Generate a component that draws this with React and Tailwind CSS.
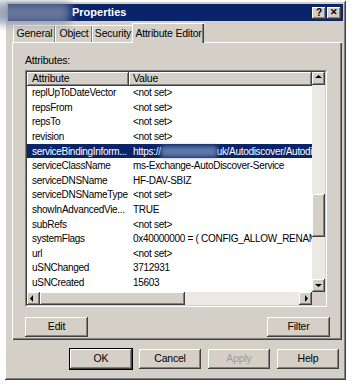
import React from 'react';

const rows = [
  ['replUpToDateVector', '<not set>'],
  ['repsFrom', '<not set>'],
  ['repsTo', '<not set>'],
  ['revision', '<not set>'],
  ['serviceBindingInform...', 'url', true],
  ['serviceClassName', 'ms-Exchange-AutoDiscover-Service'],
  ['serviceDNSName', 'HF-DAV-SBIZ'],
  ['serviceDNSNameType', '<not set>'],
  ['showInAdvancedVie...', 'TRUE'],
  ['subRefs', '<not set>'],
  ['systemFlags', '0x40000000 = ( CONFIG_ALLOW_RENAME )'],
  ['url', '<not set>'],
  ['uSNChanged', '3712931'],
  ['uSNCreated', '15603'],
  ['wWWHomePage', '<not set>'],
];

const raised =
  'bg-[#d4d0c8] shadow-[inset_-1px_-1px_#404040,inset_1px_1px_#ffffff,inset_-2px_-2px_#808080]';

const Btn = ({ children, className = '', disabled, isDefault }) => (
  <div
    className={`h-[20px] flex items-center justify-center text-[10.5px] tracking-[-0.2px] ${raised} ${
      isDefault ? 'outline outline-1 outline-black' : ''
    } ${disabled ? 'text-[#a09c94]' : 'text-black'} ${className}`}
  >
    {children}
  </div>
);

const Arrow = ({ dir }) => {
  const pts = {
    up: '3,6 6.5,3 10,6',
    down: '3,5 6.5,8 10,5',
    left: '6,3 3,6.5 6,10',
    right: '6,3 9,6.5 6,10',
  }[dir];
  return (
    <div className={`w-[13px] h-[13px] shrink-0 ${raised}`}>
      <svg width="13" height="13" viewBox="0 0 13 13">
        <polygon points={pts} fill="#000" />
      </svg>
    </div>
  );
};

const tab = 'h-[17px] flex items-center justify-center border-t border-l border-white shadow-[inset_-1px_0_#808080]';

export default function App() {
  return (
    <div
      className="w-[358px] h-[386px] bg-white relative overflow-hidden"
      style={{ fontFamily: '"Liberation Sans", Arial, sans-serif' }}
    >
      <div className={`absolute left-[5px] top-[1px] w-[341px] h-[379px] ${raised} p-[3px] flex flex-col`}>
        {/* title bar */}
        <div className="h-[17px] bg-[#0a246a] flex items-center relative">
          <span className="ml-[64px] text-white font-bold text-[11px]">Properties</span>
          <div className="ml-auto mr-[2px] flex gap-[1px]">
            <div className={`w-[14px] h-[12px] ${raised} flex items-center justify-center text-[10px] font-bold leading-none`}>?</div>
            <div className={`w-[14px] h-[12px] ${raised} flex items-center justify-center text-[9px] font-bold leading-none`}>✕</div>
          </div>
        </div>

        {/* tabs */}
        <div className="mt-[3px] ml-[5px] flex items-end h-[18px] text-[10.5px] tracking-[-0.2px] text-black">
          <div className={`${tab} w-[42px] rounded-tl-[2px]`}>General</div>
          <div className={`${tab} w-[37px]`}>Object</div>
          <div className={`${tab} w-[41px]`}>Security</div>
          <div className="h-[20px] -mb-[1px] w-[72px] -ml-[1px] flex items-center justify-center border-t border-l border-white bg-[#d4d0c8] relative z-10 shadow-[inset_-1px_0_#404040,inset_-2px_0_#808080]">
            Attribute Editor
          </div>
        </div>

        {/* tab panel */}
        <div className="ml-[4px] mr-[1px] h-[298px] border-t border-l border-white shadow-[inset_-1px_-1px_#404040,inset_-2px_-2px_#808080] px-[12px] pt-[12px] flex flex-col">
          <div className="text-[10.5px] tracking-[-0.2px] text-black leading-none">Attributes:</div>
          <div className="mt-[4px] w-[302px] h-[237px] border border-[#808080] border-r-white border-b-white">
            <div className="w-full h-full border border-[#404040] border-r-[#d4d0c8] border-b-[#d4d0c8] bg-white flex flex-col">
              <div className="flex flex-1 min-h-0">
                <div className="flex-1 flex flex-col min-w-0 overflow-hidden text-[10px] tracking-[-0.3px]">
                  <div className="h-[14px] flex shrink-0 text-[10.5px] tracking-[-0.2px]">
                    <div className={`w-[102px] ${raised} pl-[5px] flex items-center`}>Attribute</div>
                    <div className={`flex-1 ${raised} pl-[4px] flex items-center`}>Value</div>
                  </div>
                  {rows.map(([a, v, sel]) => (
                    <div
                      key={a}
                      className={`h-[14.6px] shrink-0 flex items-center whitespace-nowrap ${
                        sel ? 'bg-[#0a246a] text-white' : 'text-black'
                      }`}
                    >
                      <div className="w-[102px] pl-[5px] shrink-0 overflow-hidden">{a}</div>
                      <div className="pl-[4px] flex items-center">
                        {sel ? (
                          <>
                            <span>https://</span>
                            <span className="inline-block w-[56px] h-[11px] bg-[#5c78a8] blur-[2px]" />
                            <span>uk/Autodiscover/Autodiscover.xml</span>
                          </>
                        ) : (
                          v
                        )}
                      </div>
                    </div>
                  ))}
                </div>
                <div className="w-[13px] flex flex-col bg-[#ebe9e4] shrink-0">
                  <Arrow dir="up" />
                  <div className="h-[109px]" />
                  <div className={`h-[43px] ${raised}`} />
                  <div className="flex-1" />
                  <Arrow dir="down" />
                </div>
              </div>
              <div className="h-[13px] flex shrink-0 bg-[#ebe9e4]">
                <Arrow dir="left" />
                <div className={`w-[145px] ${raised}`} />
                <div className="flex-1" />
                <Arrow dir="right" />
                <div className="w-[13px] bg-[#d4d0c8]" />
              </div>
            </div>
          </div>
          <div className="mt-[10px] flex justify-between">
            <Btn className="w-[63px]">Edit</Btn>
            <Btn className="w-[63px]">Filter</Btn>
          </div>
        </div>

        {/* bottom buttons */}
        <div className="mt-[9px] ml-[62px] flex gap-[7px]">
          <Btn className="w-[62px]" isDefault>OK</Btn>
          <Btn className="w-[62px]">Cancel</Btn>
          <Btn className="w-[62px]" disabled>Apply</Btn>
          <Btn className="w-[62px]">Help</Btn>
        </div>
      </div>

      {/* redacted title blur */}
      <div className="absolute left-[-6px] top-[2px] w-[76px] h-[22px] bg-[#7f8aa6] blur-[5px] opacity-80" />
    </div>
  );
}
